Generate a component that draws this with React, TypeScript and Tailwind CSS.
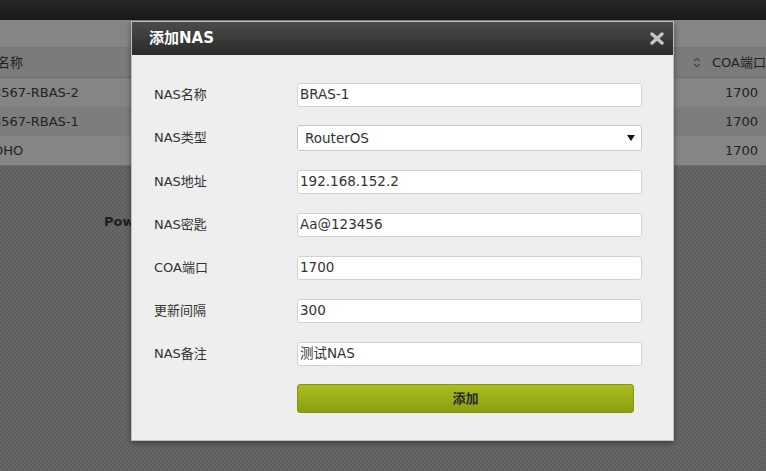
import React from 'react';

const font = { fontFamily: '"DejaVu Sans", "Noto Sans CJK SC", sans-serif' };

const fields: { label: string; value: string; select?: boolean }[] = [
  { label: 'NAS名称', value: 'BRAS-1' },
  { label: 'NAS类型', value: 'RouterOS', select: true },
  { label: 'NAS地址', value: '192.168.152.2' },
  { label: 'NAS密匙', value: 'Aa@123456' },
  { label: 'COA端口', value: '1700' },
  { label: '更新间隔', value: '300' },
  { label: 'NAS备注', value: '测试NAS' },
];

const rows = [
  { name: '3567-RBAS-2', port: '1700', bg: 'bg-[#858585]' },
  { name: '3567-RBAS-1', port: '1700', bg: 'bg-[#7d7d7d]' },
  { name: 'OHO', port: '1700', bg: 'bg-[#858585]' },
];

const Backdrop: React.FC = () => (
  <div className="flex flex-col h-full">
    <div className="h-[20px] bg-gradient-to-b from-[#262626] to-[#1a1a1a]" />
    <div className="h-[28px] bg-[#858585] border-b border-[#777]" />
    <div className="h-[30px] bg-[#7b7b7b] flex items-center justify-between text-[13px] text-[#222] border-b border-[#6f6f6f]">
      <span className="-ml-[3px]">名称</span>
      <div className="flex items-center">
        <svg width="8" height="11" viewBox="0 0 8 11" className="mr-[11px]">
          <path d="M1 4 L4 1.5 L7 4 M1 7 L4 9.5 L7 7" stroke="#444" strokeWidth="1.2" fill="none" />
        </svg>
        <span className="w-[54px] whitespace-nowrap overflow-hidden">COA端口</span>
      </div>
    </div>
    {rows.map((r) => (
      <div key={r.name} className={`h-[29px] ${r.bg} flex items-center justify-between text-[13px] text-[#222]`}>
        <span className="-ml-[7px]">{r.name}</span>
        <span className="mr-[8px]">{r.port}</span>
      </div>
    ))}
    <div className="h-px bg-[#6a6a6a]" />
    <div className="flex-1 bg-[repeating-conic-gradient(#676767_0_25%,#5f5f5f_0_50%)] bg-[length:4px_4px]">
      <div className="pt-[43px] w-[131px] overflow-hidden whitespace-nowrap">
        <span className="pl-[104px] text-[13px] font-bold text-[#1e1e1e]">Powered by</span>
      </div>
    </div>
  </div>
);

const Field: React.FC<{ label: string; value: string; select?: boolean }> = ({ label, value, select }) => (
  <div className={`${select ? 'h-[44px]' : 'h-[43px]'} flex items-center`}>
    <div className="w-[143px] text-[13px] text-[#333]">{label}</div>
    {select ? (
      <div className="w-[345px] h-[26px] bg-white border border-[#c8c8c8] rounded-[3px] flex items-center justify-between pl-[7px] pr-[6px] text-[13.5px] text-[#333]">
        <span>{value}</span>
        <svg width="8" height="6" viewBox="0 0 8 6">
          <path d="M0 0 H8 L4 6 Z" fill="#111" />
        </svg>
      </div>
    ) : (
      <div className="w-[345px] h-[24px] bg-white border border-[#d2d2d2] rounded-[3px] flex items-center pl-[2px] text-[13.5px] text-[#333]">
        {value}
      </div>
    )}
  </div>
);

export default function App() {
  return (
    <div className="relative w-[766px] h-[471px] overflow-hidden bg-[#636363]" style={font}>
      <Backdrop />
      <div className="absolute left-[131px] top-[21px] w-[543px] border border-[#bdbdbd] shadow-[0_2px_6px_rgba(0,0,0,0.4)]">
        <div className="h-[33px] bg-gradient-to-b from-[#4b4b4b] to-[#2b2b2b] flex items-center justify-between pl-[17px] pr-[9px]">
          <span className="text-white font-bold text-[15px]">添加NAS</span>
          <svg width="14" height="13" viewBox="0 0 14 13">
            <path d="M2 2 L12 11 M12 2 L2 11" stroke="#c4c4c4" strokeWidth="3.4" strokeLinecap="round" />
          </svg>
        </div>
        <div className="bg-[#eeeeee] pt-[18px] pl-[22px] pb-[27px]">
          {fields.map((f) => (
            <Field key={f.label} {...f} />
          ))}
          <div className="mt-[9px] ml-[143px] w-[337px] h-[29px] rounded-[3px] bg-gradient-to-b from-[#abbd22] to-[#8c9e0e] border border-[#86960c] flex items-center justify-center text-[13px] font-bold text-[#2a2a2a]">
            添加
          </div>
        </div>
      </div>
    </div>
  );
}
